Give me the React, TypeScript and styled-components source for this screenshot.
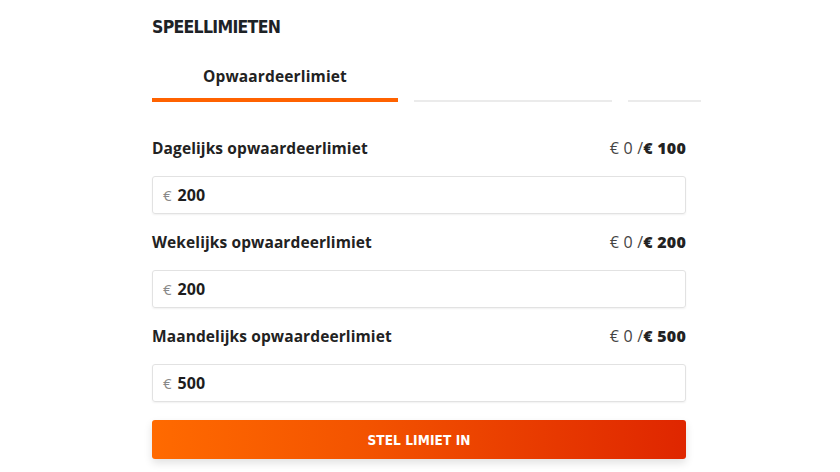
import React from "react";
import styled, { createGlobalStyle } from "styled-components";

const Global = createGlobalStyle`
  body {
    margin: 0;
    background: #fff;
    font-family: "Open Sans", "Lato", sans-serif;
    color: #222;
  }
`;

const Page = styled.div`
  width: 840px;
  height: 472px;
  overflow: hidden;
  padding-left: 152px;
  box-sizing: border-box;
`;

const Panel = styled.div`
  width: 534px;
`;

const Title = styled.h2`
  margin: 0;
  padding-top: 17px;
  font-family: "DejaVu Sans Condensed", "Liberation Sans Narrow", sans-serif;
  font-weight: 800;
  font-size: 17.5px;
  letter-spacing: -0.7px;
  color: #1d2226;
  line-height: 20px;
`;

const Tabs = styled.div`
  display: flex;
  gap: 16px;
  margin-top: 29px;
  width: 549px;
  align-items: flex-end;
`;

const Tab = styled.div<{ $w: number; $active?: boolean }>`
  width: ${(p) => p.$w}px;
  flex: none;
  text-align: center;
  font-weight: 700;
  font-size: 15.5px;
  letter-spacing: 0.15px;
  color: #222;
  line-height: 20px;
  padding-bottom: ${(p) => (p.$active ? "12px" : "0")};
  border-bottom: ${(p) => (p.$active ? "4px solid #ff6200" : "2px solid #ebebeb")};
`;

const Field = styled.div`
  margin-top: 36px;
  & + & {
    margin-top: 18px;
  }
`;

const LabelRow = styled.div`
  display: flex;
  justify-content: space-between;
  align-items: center;
  height: 20px;
`;

const Label = styled.div`
  font-weight: 700;
  font-size: 15.5px;
  letter-spacing: 0.1px;
  color: #222;
`;

const Usage = styled.div`
  font-size: 16px;
  color: #444;
  letter-spacing: 0.2px;
  b {
    font-weight: 800;
    color: #222;
  }
`;

const InputBox = styled.div`
  margin-top: 18px;
  height: 38px;
  box-sizing: border-box;
  border: 1px solid #e2e2e2;
  border-radius: 3px;
  box-shadow: 0 1px 2px rgba(0, 0, 0, 0.06);
  display: flex;
  align-items: center;
  padding-left: 10px;
  gap: 6px;
`;

const Currency = styled.span`
  color: #888;
  font-size: 15px;
`;

const Amount = styled.span`
  font-weight: 700;
  font-size: 16px;
  color: #1d1d1d;
`;

const Button = styled.button`
  margin-top: 18px;
  width: 100%;
  height: 39px;
  border: none;
  border-radius: 3px;
  background: linear-gradient(90deg, #ff6a00 0%, #f35300 40%, #df2600 100%);
  box-shadow: 0 4px 8px rgba(0, 0, 0, 0.12);
  color: #fff;
  font-family: "DejaVu Sans Condensed", "Liberation Sans Narrow", sans-serif;
  font-weight: 700;
  font-size: 13.5px;
  letter-spacing: 0.1px;
  display: block;
`;

const limits = [
  { label: "Dagelijks opwaardeerlimiet", max: 100, value: 200 },
  { label: "Wekelijks opwaardeerlimiet", max: 200, value: 200 },
  { label: "Maandelijks opwaardeerlimiet", max: 500, value: 500 },
];

export default function App() {
  return (
    <Page>
      <Global />
      <Panel>
        <Title>SPEELLIMIETEN</Title>
        <Tabs>
          <Tab $w={246} $active>
            Opwaardeerlimiet
          </Tab>
          <Tab $w={198} />
          <Tab $w={73} />
        </Tabs>
        {limits.map((l) => (
          <Field key={l.label}>
            <LabelRow>
              <Label>{l.label}</Label>
              <Usage>
                € 0 /<b>€ {l.max}</b>
              </Usage>
            </LabelRow>
            <InputBox>
              <Currency>€</Currency>
              <Amount>{l.value}</Amount>
            </InputBox>
          </Field>
        ))}
        <Button>STEL LIMIET IN</Button>
      </Panel>
    </Page>
  );
}
